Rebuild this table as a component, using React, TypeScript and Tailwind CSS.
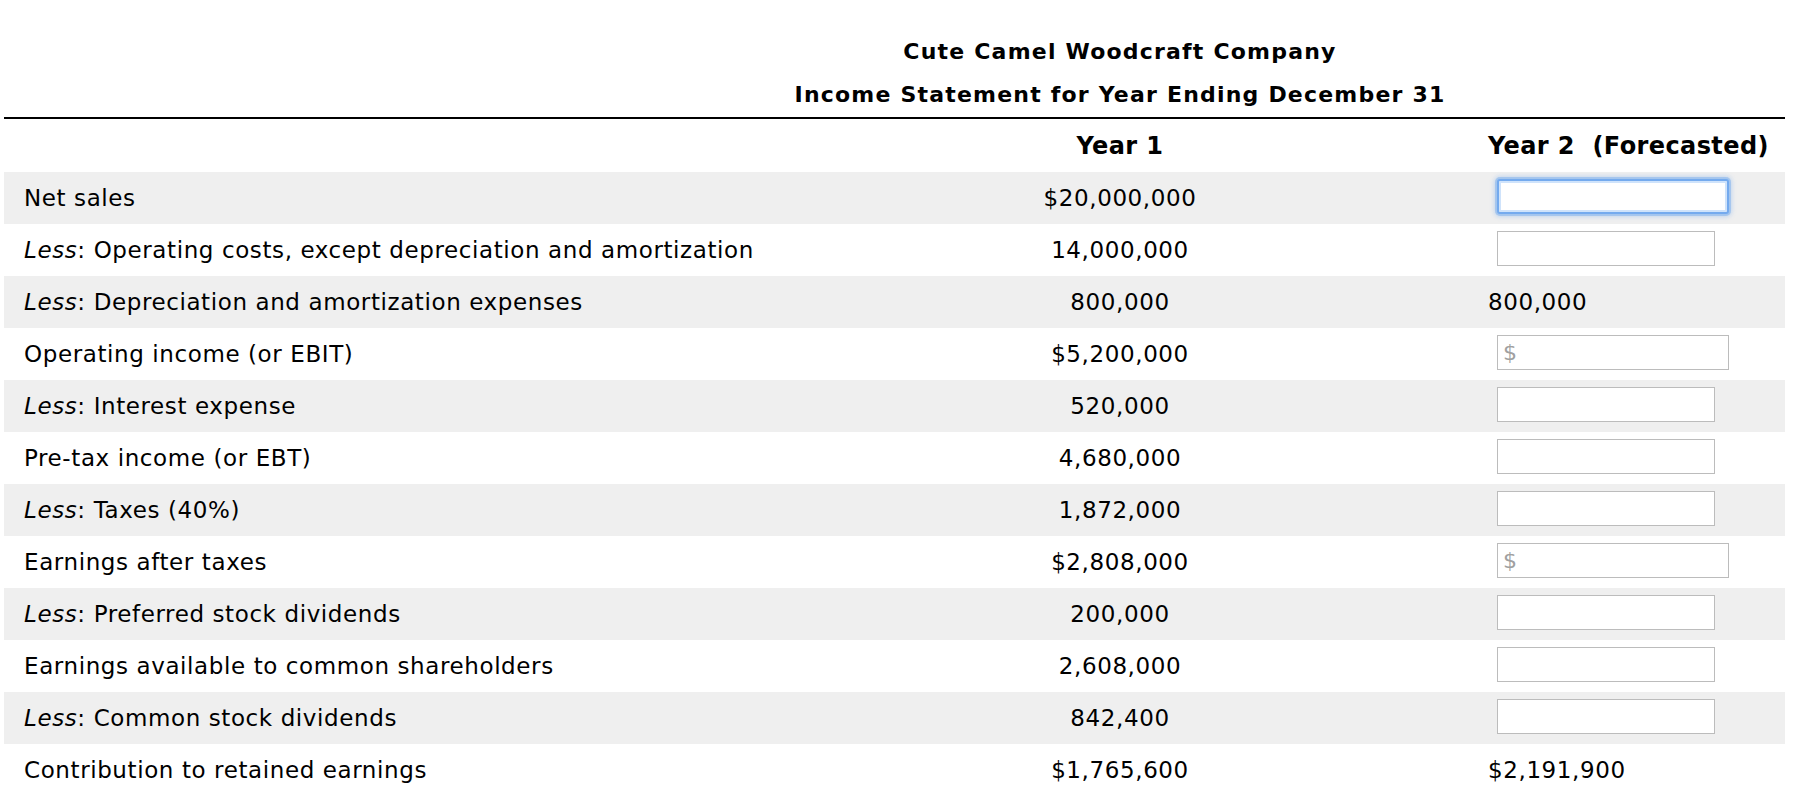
import React from "react";

type Cell =
  | { kind: "text"; value: string }
  | { kind: "input"; wide?: boolean; dollar?: boolean; focused?: boolean };

type Row = {
  less?: boolean;
  label: string;
  year1: string;
  year2: Cell;
};

const ROWS: Row[] = [
  { label: "Net sales", year1: "$20,000,000", year2: { kind: "input", wide: true, focused: true } },
  { less: true, label: "Operating costs, except depreciation and amortization", year1: "14,000,000", year2: { kind: "input" } },
  { less: true, label: "Depreciation and amortization expenses", year1: "800,000", year2: { kind: "text", value: "800,000" } },
  { label: "Operating income (or EBIT)", year1: "$5,200,000", year2: { kind: "input", wide: true, dollar: true } },
  { less: true, label: "Interest expense", year1: "520,000", year2: { kind: "input" } },
  { label: "Pre-tax income (or EBT)", year1: "4,680,000", year2: { kind: "input" } },
  { less: true, label: "Taxes (40%)", year1: "1,872,000", year2: { kind: "input" } },
  { label: "Earnings after taxes", year1: "$2,808,000", year2: { kind: "input", wide: true, dollar: true } },
  { less: true, label: "Preferred stock dividends", year1: "200,000", year2: { kind: "input" } },
  { label: "Earnings available to common shareholders", year1: "2,608,000", year2: { kind: "input" } },
  { less: true, label: "Common stock dividends", year1: "842,400", year2: { kind: "input" } },
  { label: "Contribution to retained earnings", year1: "$1,765,600", year2: { kind: "text", value: "$2,191,900" } },
];

function Year2Cell({ cell }: { cell: Cell }) {
  if (cell.kind === "text") {
    return <span>{cell.value}</span>;
  }
  const width = cell.wide ? "w-[232px]" : "w-[218px]";
  if (cell.focused) {
    return (
      <input
        className={`${width} mb-[3px] ml-[9px] h-[35px] rounded-[3px] border-2 border-[#74aaee] bg-white shadow-[0_0_0_2px_rgba(116,170,238,0.45),0_0_4px_3px_rgba(116,170,238,0.35),inset_0_0_0_2px_#cfe3fb] outline-none`}
      />
    );
  }
  return (
    <input
      placeholder={cell.dollar ? "$" : ""}
      className={`${width} mb-[3px] ml-[9px] h-[35px] border border-[#bcbcbc] bg-white pl-[5px] text-[22px] tracking-normal outline-none placeholder:text-[#a0a0a0]`}
    />
  );
}

export default function App() {
  return (
    <div className="min-h-screen bg-white font-['DejaVu_Sans',_Verdana,_sans-serif] text-[23px] tracking-[0.6px] text-black">
      <div className="ml-[4px] w-[1781px]">
        <div className="grid grid-cols-[816px_600px_365px] pt-[30px] text-[22px] font-bold leading-[43px] tracking-[1.2px]">
          <div />
          <div className="flex flex-col items-center whitespace-nowrap">
            <div>Cute Camel Woodcraft Company</div>
            <div>Income Statement for Year Ending December 31</div>
          </div>
          <div />
        </div>
        <div className="mt-[1px] h-[2px] bg-black" />
        <div className="grid h-[53px] grid-cols-[816px_600px_365px] items-center text-[24px] font-bold tracking-[0.4px]">
          <div />
          <div className="text-center">Year 1</div>
          <div className="whitespace-pre pl-[68px]">Year 2  (Forecasted)</div>
        </div>
        {ROWS.map((row, i) => (
          <div
            key={row.label}
            className={`grid h-[52px] grid-cols-[816px_600px_365px] items-center ${i % 2 === 0 ? "bg-[#efefef]" : "bg-white"}`}
          >
            <div className="pl-[20px]">
              {row.less && (
                <>
                  <span className="italic">Less</span>:{" "}
                </>
              )}
              {row.label}
            </div>
            <div className="text-center">{row.year1}</div>
            <div className="flex items-center pl-[68px]">
              <Year2Cell cell={row.year2} />
            </div>
          </div>
        ))}
      </div>
    </div>
  );
}
